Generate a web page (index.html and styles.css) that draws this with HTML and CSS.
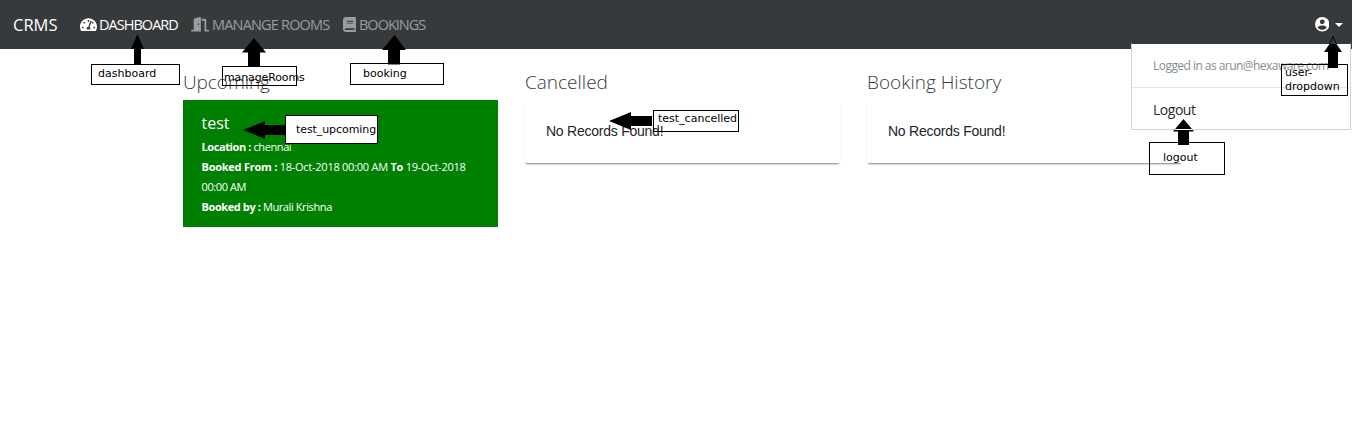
FILE: index.html
```html
<!DOCTYPE html>
<html lang="en">
<head>
<meta charset="utf-8">
<title>CRMS</title>
<link rel="stylesheet" href="styles.css">
</head>
<body>
<nav class="navbar">
  <span class="brand">CRMS</span>
  <a class="nav-link active">
    <svg class="icon-gauge" viewBox="0 32 576 448"><path d="M288 32C128.940 32 0 160.940 0 320c0 52.800 14.250 102.260 39.060 144.800 5.610 9.620 16.300 15.200 27.440 15.200h443c11.140 0 21.830-5.580 27.440-15.200C561.750 422.260 576 372.800 576 320c0-159.060-128.940-288-288-288zm0 64c14.710 0 26.580 10.130 30.320 23.650-1.110 2.260-2.640 4.230-3.450 6.670l-9.220 27.670c-5.130 3.490-10.970 6.010-17.640 6.010-17.670 0-32-14.330-32-32S270.330 96 288 96zM96 384c-17.670 0-32-14.330-32-32s14.330-32 32-32 32 14.330 32 32-14.330 32-32 32zm48-160c-17.670 0-32-14.330-32-32s14.330-32 32-32 32 14.330 32 32-14.330 32-32 32zm246.770-72.410l-61.330 184C343.130 347.330 352 364.540 352 384c0 11.720-3.380 22.550-8.880 32H232.880c-5.500-9.450-8.880-20.280-8.880-32 0-33.940 26.500-61.430 59.900-63.590l61.340-184.010c4.170-12.560 17.730-19.450 30.360-15.170 12.570 4.190 19.350 17.790 15.170 30.360zM432 160c17.670 0 32 14.330 32 32s-14.330 32-32 32-32-14.330-32-32 14.330-32 32-32zm48 224c-17.670 0-32-14.330-32-32s14.330-32 32-32 32 14.330 32 32-14.330 32-32 32z"/></svg>
    <span class="t-dash">DASHBOARD</span>
  </a>
  <a class="nav-link rooms">
    <svg class="icon-door" viewBox="0 0 640 512"><path d="M624 448h-80V113.450C544 86.190 522.470 64 496 64H384v64h96v384h144c8.840 0 16-7.160 16-16v-32c0-8.840-7.160-16-16-16zM312.240 1.010l-192 49.740C105.990 54.440 96 67.700 96 82.920V448H16c-8.840 0-16 7.160-16 16v32c0 8.840 7.160 16 16 16h336V33.180c0-21.580-19.560-37.410-39.760-32.170zM264 288c-13.250 0-24-14.330-24-32s10.750-32 24-32 24 14.330 24 32-10.750 32-24 32z"/></svg>
    <span class="t-rooms">MANANGE ROOMS</span>
  </a>
  <a class="nav-link bookings">
    <svg class="icon-book" viewBox="0 0 448 512"><path d="M448 360V24c0-13.300-10.700-24-24-24H96C43 0 0 43 0 96v320c0 53 43 96 96 96h328c13.300 0 24-10.700 24-24v-16c0-7.500-3.500-14.300-8.900-18.700-4.200-15.400-4.200-59.300 0-74.700 5.400-4.300 8.900-11.100 8.900-18.600zM128 134c0-3.300 2.700-6 6-6h212c3.300 0 6 2.700 6 6v20c0 3.300-2.700 6-6 6H134c-3.300 0-6-2.700-6-6v-20zm0 64c0-3.300 2.700-6 6-6h212c3.300 0 6 2.700 6 6v20c0 3.300-2.700 6-6 6H134c-3.300 0-6-2.700-6-6v-20zm253.400 250H96c-17.700 0-32-14.300-32-32 0-17.600 14.400-32 32-32h285.400c-1.900 17.100-1.900 46.900 0 64z"/></svg>
    <span class="t-book">BOOKINGS</span>
  </a>
  <a class="user">
    <svg class="icon-user" viewBox="0 0 24 24"><path fill-rule="evenodd" d="M12 0a12 12 0 1 0 0 24a12 12 0 1 0 0-24zM12 4a4 4 0 1 1 0 8a4 4 0 1 1 0-8zM4.500 17.500C6 14.800 8.500 14 12 14s6 .8 7.500 3.500C17.800 20 15 21.300 12 21.300S6.200 20 4.500 17.500z"/></svg>
    <i class="caret"></i>
  </a>
  <div class="menu">
    <div class="menu-info"><span>Logged in as arun@hexaware.com</span></div>
    <div class="menu-item"><span>Logout</span></div>
  </div>
</nav>
<main class="columns">
  <section>
    <h2 class="h-up">Upcoming</h2>
    <div class="card booking">
      <h3>test</h3>
      <p class="l1"><b>Location :</b> chennai</p>
      <p class="l2"><b>Booked From :</b> 18-Oct-2018 00:00 AM <b>To</b> 19-Oct-2018</p>
      <p class="l3">00:00 AM</p>
      <p class="l4"><b>Booked by :</b> Murali Krishna</p>
    </div>
  </section>
  <section>
    <h2 class="h-can">Cancelled</h2>
    <div class="card empty">No Records Found!</div>
  </section>
  <section>
    <h2 class="h-hist">Booking History</h2>
    <div class="card empty">No Records Found!</div>
  </section>
</main>
<div class="notes">
  <div class="note n-dash"><span>dashboard</span></div>
  <div class="note n-rooms"><span>manageRooms</span></div>
  <div class="note n-book"><span>booking</span></div>
  <div class="note n-up"><span>test_upcoming</span></div>
  <div class="note n-can"><span>test_cancelled</span></div>
  <div class="note n-user"><span>user-<br>dropdown</span></div>
  <div class="note n-out"><span>logout</span></div>
  <svg class="arrows" width="1352" height="441">
    <path d="M137.500 34l6.500 15h-3v15h-7V49h-3z"/>
    <path d="M254 38l12 14.500h-6V66h-12V52.500h-6z"/>
    <path d="M394.500 35l11.500 15h-6v14.500h-12V50h-6z"/>
    <path d="M1336.500 44l5.500 8h-4v16h-10V52h-4l5.500-8z"/>
    <path class="outline" d="M1329.500 44l3.500-7.500 3.500 7.500"/>
    <path d="M1183.500 119l10.500 12.500h-5V145h-11v-13.500h-5z"/>
    <path class="cut" d="M1175 129.500h17.500"/>
    <path d="M243 130l22-9v4h20v10h-20v4z"/>
    <path d="M609 121l22-9v4h21v10h-21v4z"/>
  </svg>
</div>
</body>
</html>
```
FILE: styles.css
```css
* { box-sizing: border-box; }
body { margin: 0; height: 441px; overflow: hidden; position: relative; background: #fff; font-family: "Open Sans", sans-serif; }
svg { display: block; fill: currentColor; }
h2, h3, p { margin: 0; font-weight: 400; white-space: nowrap; }

.navbar { position: relative; display: flex; align-items: center; height: 49px; padding-left: 13px; background: #373a3c; color: #fff; white-space: nowrap; }
.brand { width: 67px; font-size: 16.500px; letter-spacing: 0; }
.nav-link { display: flex; align-items: center; gap: 2px; width: 111px; font-size: 14.500px; color: #9b9c9d; }
.nav-link.active { color: #fff; }
.nav-link.rooms { width: 152px; gap: 3px; }
.nav-link.bookings { gap: 3px; }
.t-dash { letter-spacing: -0.970px; }
.t-rooms { letter-spacing: -0.820px; }
.t-book { letter-spacing: -1px; }
.icon-gauge { width: 17px; height: 13.500px; }
.icon-door { width: 18px; height: 14.500px; }
.icon-book { width: 13px; height: 15px; }
.user { display: flex; align-items: center; gap: 6px; margin-left: auto; padding-right: 9px; }
.icon-user { width: 14.500px; height: 14.500px; }
.caret { border: 4px solid transparent; border-top-color: #fff; border-bottom: 0; }

.menu { position: absolute; top: 43px; left: 1131px; width: 220px; height: 87px; background: #fff; border: 1px solid #d3d3d3; border-top-color: #373a3c; }
.menu-info { display: flex; align-items: center; height: 44px; padding-left: 21px; border-bottom: 1px solid #e5e6e7; font-size: 12px; letter-spacing: -0.540px; color: #868e96; }
.menu-item { display: flex; align-items: center; height: 42px; padding-left: 21px; font-size: 14px; letter-spacing: -0.480px; color: #292b2c; }

.columns { display: grid; grid-template-columns: repeat(3, 315px); gap: 27px; padding: 20px 0 0 183px; }
h2 { height: 31px; line-height: 27px; font-size: 19px; font-weight: 300; color: #373a3c; }
.card { border-radius: 2px; }
.booking { height: 127px; padding: 10px 17.500px; border-radius: 0; border: 1px solid #0a770a; background: #008000; color: #fff; }
.booking h3 { line-height: 24px; font-size: 16px; height: 26px; }
.booking p { height: 20px; line-height: 20px; font-size: 11px; letter-spacing: -0.300px; }
.booking .l2 { letter-spacing: -0.250px; }
.booking .l3 { letter-spacing: -0.400px; }
.booking .l4 { letter-spacing: -0.400px; }
.booking .l1 { letter-spacing: -0.400px; }
.empty { height: 63px; padding: 20px 21px; font: 14px/22px "Liberation Sans", Arial, sans-serif; letter-spacing: -0.240px; color: #212529; box-shadow: 0 2px 2px -1px rgba(0,0,0,.5); }
.h-up { letter-spacing: -0.050px; }

.notes { position: absolute; inset: 0; pointer-events: none; }
.note { position: absolute; border: 1px solid #000; font: 11px/14px "DejaVu Sans", sans-serif; white-space: nowrap; color: #000; }
.arrows { position: absolute; top: 0; left: 0; fill: #000; }
.outline { fill: none; stroke: #000; }
.cut { stroke: #fff; stroke-width: 1; }
.n-dash { left: 91px; top: 64px; width: 89px; height: 21px; padding: 2px 6px; background: #fff; }
.n-rooms { left: 222px; top: 66px; width: 75px; height: 20px; padding: 4px 1px; letter-spacing: -0.120px; }
.n-book { left: 350px; top: 63px; width: 94px; height: 22px; padding: 3px 12px; background: #fff; }
.n-up { left: 285px; top: 115px; width: 93px; height: 29px; padding: 7px 10px; background: #fff; letter-spacing: -0.080px; }
.n-can { left: 653px; top: 110px; width: 86px; height: 22px; padding: 1px 4px; }
.n-user { left: 1281px; top: 64px; width: 67px; height: 32px; padding: 1px 3px; }
.n-out { left: 1149px; top: 142px; width: 76px; height: 33px; padding: 8px 13px; }
```
